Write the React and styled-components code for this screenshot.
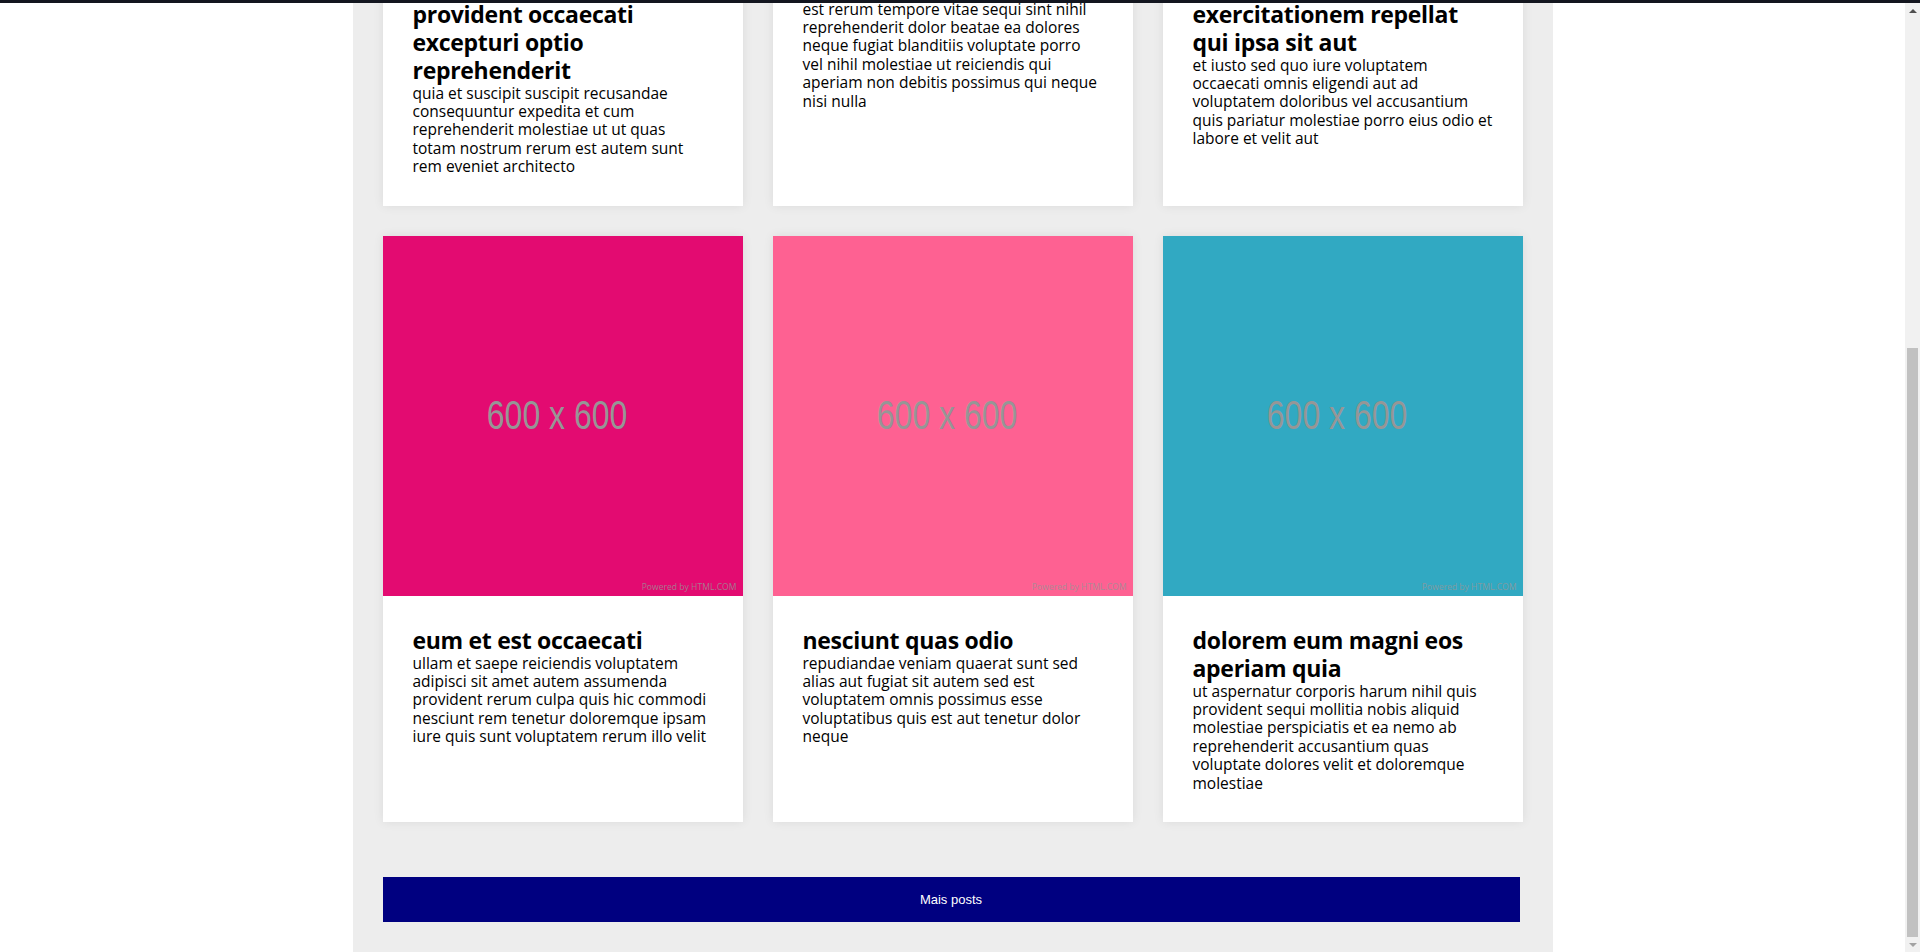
import React from "react";
import styled, { createGlobalStyle } from "styled-components";

const GlobalStyle = createGlobalStyle`
  html, body {
    margin: 0;
    padding: 0;
    height: 100%;
    overflow: hidden;
    background: #fff;
  }
  #root {
    height: 100%;
  }
  * {
    box-sizing: border-box;
  }
`;

const posts = [
    {
        color: "#7f3fbf",
        title: ["sunt aut facere repellat", "provident occaecati", "excepturi optio", "reprehenderit"],
        body: [
            "quia et suscipit suscipit recusandae",
            "consequuntur expedita et cum",
            "reprehenderit molestiae ut ut quas",
            "totam nostrum rerum est autem sunt",
            "rem eveniet architecto",
        ],
    },
    {
        color: "#3fbf7f",
        title: ["qui est esse"],
        body: [
            "est rerum tempore vitae sequi sint nihil",
            "reprehenderit dolor beatae ea dolores",
            "neque fugiat blanditiis voluptate porro",
            "vel nihil molestiae ut reiciendis qui",
            "aperiam non debitis possimus qui neque",
            "nisi nulla",
        ],
    },
    {
        color: "#f2a33a",
        title: ["ea molestias quasi", "exercitationem repellat", "qui ipsa sit aut"],
        body: [
            "et iusto sed quo iure voluptatem",
            "occaecati omnis eligendi aut ad",
            "voluptatem doloribus vel accusantium",
            "quis pariatur molestiae porro eius odio et",
            "labore et velit aut",
        ],
    },
    {
        color: "#e30b71",
        title: ["eum et est occaecati"],
        body: [
            "ullam et saepe reiciendis voluptatem",
            "adipisci sit amet autem assumenda",
            "provident rerum culpa quis hic commodi",
            "nesciunt rem tenetur doloremque ipsam",
            "iure quis sunt voluptatem rerum illo velit",
        ],
    },
    {
        color: "#fe6192",
        title: ["nesciunt quas odio"],
        body: [
            "repudiandae veniam quaerat sunt sed",
            "alias aut fugiat sit autem sed est",
            "voluptatem omnis possimus esse",
            "voluptatibus quis est aut tenetur dolor",
            "neque",
        ],
    },
    {
        color: "#31a9c2",
        title: ["dolorem eum magni eos", "aperiam quia"],
        body: [
            "ut aspernatur corporis harum nihil quis",
            "provident sequi mollitia nobis aliquid",
            "molestiae perspiciatis et ea nemo ab",
            "reprehenderit accusantium quas",
            "voluptate dolores velit et doloremque",
            "molestiae",
        ],
    },
];

const Frame = styled.div`
    height: 100vh;
    display: flex;
    flex-direction: column;
`;

const TopLine = styled.div`
    flex: none;
    height: 3px;
    background: #13161f;
`;

const Window = styled.div`
    flex: 1;
    min-height: 0;
    display: flex;
`;

// page scrolled to its end: the content sits on the bottom edge and its top is clipped
const Viewport = styled.div`
    flex: 1;
    overflow: hidden;
    display: flex;
    flex-direction: column;
    justify-content: flex-end;
    align-items: center;
`;

const Main = styled.main`
    flex: none;
    width: 1200px;
    padding: 0 30px 30px;
    background: #ededed;
    font-family: "Open Sans", "Noto Sans", sans-serif;
    color: #000;
`;

const Grid = styled.div`
    display: grid;
    grid-template-columns: repeat(3, 360px);
    gap: 30px;
`;

const Card = styled.article`
    background: #fff;
    box-shadow: 0 0 10px rgba(0, 0, 0, 0.08);
`;

const Placeholder = styled.div`
    position: relative;
    height: 360px;
    background: ${(props) => props.color};
    display: flex;
    align-items: center;
    justify-content: center;
`;

const Size = styled.span`
    margin-right: 10px;
    font-family: "Liberation Sans", Arial, sans-serif;
    font-size: 41px;
    color: #969696;
    transform: scaleX(0.78);
`;

const Powered = styled.span`
    position: absolute;
    right: 6px;
    bottom: 3px;
    font-family: "Open Sans", sans-serif;
    font-size: 8.6px;
    color: rgba(150, 150, 150, 0.8);
`;

const Body = styled.div`
    padding: 30px;
`;

const Title = styled.h2`
    margin: 0;
    font-size: 23px;
    line-height: 28px;
    font-weight: 700;
    letter-spacing: -0.3px;
`;

const Text = styled.p`
    margin: 0;
    font-size: 15.5px;
    line-height: 18.4px;
`;

const Line = styled.span`
    display: block;
    white-space: pre;
`;

const MoreButton = styled.button`
    display: block;
    width: 1137px;
    height: 45px;
    margin-top: 55px;
    border: none;
    background: #000080;
    color: #fff;
    font-family: "Liberation Sans", Arial, sans-serif;
    font-size: 13px;
`;

const Scrollbar = styled.div`
    flex: none;
    width: 15px;
    background: #f1f1f1;
    display: flex;
    flex-direction: column;
`;

const Arrow = styled.div`
    flex: none;
    height: 15px;
    display: flex;
    align-items: center;
    justify-content: center;

    &::after {
        content: "";
        border-left: 4px solid transparent;
        border-right: 4px solid transparent;
        ${(props) => props.up
            ? "border-bottom: 4px solid #505050;"
            : "border-top: 4px solid #a3a3a3;"}
    }
`;

const Track = styled.div`
    flex: 1;
`;

const Thumb = styled.div`
    flex: none;
    height: 589px;
    margin: 0 2px;
    background: #c1c1c1;
`;

function Post({ post }) {
    return (
        <Card>
            <Placeholder color={post.color}>
                <Size>600 x 600</Size>
                <Powered>Powered by HTML.COM</Powered>
            </Placeholder>
            <Body>
                <Title>
                    {post.title.map((t, i) => <Line key={i}>{t}</Line>)}
                </Title>
                <Text>
                    {post.body.map((t, i) => <Line key={i}>{t}</Line>)}
                </Text>
            </Body>
        </Card>
    );
}

export default function App() {
    return (
        <>
            <GlobalStyle />
            <Frame>
                <TopLine />
                <Window>
                    <Viewport>
                        <Main>
                            <Grid>
                                {posts.map((p, i) => <Post key={i} post={p} />)}
                            </Grid>
                            <MoreButton>Mais posts</MoreButton>
                        </Main>
                    </Viewport>
                    <Scrollbar>
                        <Arrow up />
                        <Track />
                        <Thumb />
                        <Arrow />
                    </Scrollbar>
                </Window>
            </Frame>
        </>
    );
}
